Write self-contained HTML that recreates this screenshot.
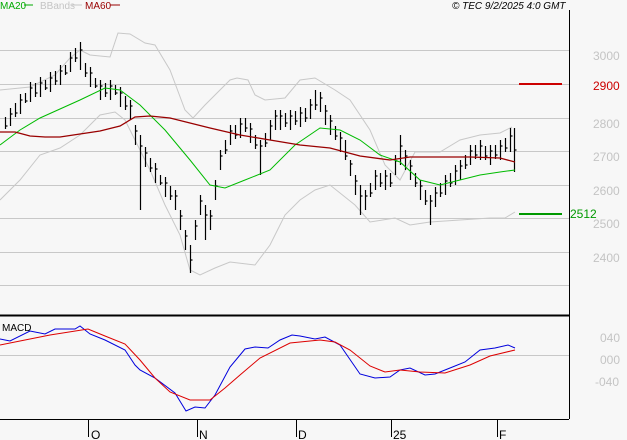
<!DOCTYPE html>
<html><head><meta charset="utf-8"><style>
html,body{margin:0;padding:0;background:#f7f7f7;}
body{width:627px;height:440px;overflow:hidden;font-family:"Liberation Sans",sans-serif;}
svg{display:block}
text{font-family:"Liberation Sans",sans-serif}
</style></head><body>
<svg width="627" height="440" viewBox="0 0 627 440" xmlns="http://www.w3.org/2000/svg">
<rect width="627" height="440" fill="#f7f7f7"/>
<g stroke="#c8c8c8" stroke-width="1">
<line x1="0" y1="50.5" x2="569" y2="50.5"/>
<line x1="0" y1="84.5" x2="569" y2="84.5"/>
<line x1="0" y1="118.5" x2="569" y2="118.5"/>
<line x1="0" y1="151.5" x2="569" y2="151.5"/>
<line x1="0" y1="185.5" x2="569" y2="185.5"/>
<line x1="0" y1="218.5" x2="569" y2="218.5"/>
<line x1="0" y1="252.5" x2="569" y2="252.5"/>
<line x1="0" y1="285.5" x2="569" y2="285.5"/>
<line x1="0" y1="355.5" x2="569" y2="355.5"/>
</g>
<line x1="569.5" y1="10" x2="569.5" y2="419" stroke="#000"/>
<line x1="0" y1="315.5" x2="569" y2="315.5" stroke="#000" stroke-width="2"/>
<line x1="0" y1="419.5" x2="569" y2="419.5" stroke="#000"/>
<g stroke="#000"><line x1="88.5" y1="419" x2="88.5" y2="437"/><line x1="197.5" y1="419" x2="197.5" y2="437"/><line x1="296.5" y1="419" x2="296.5" y2="437"/><line x1="391.5" y1="419" x2="391.5" y2="437"/><line x1="497.5" y1="419" x2="497.5" y2="437"/></g>
<g font-size="12" fill="#000"><text x="91" y="439">O</text><text x="199" y="439">N</text><text x="298" y="439">D</text><text x="393" y="439">25</text><text x="499" y="439">F</text></g>
<g font-size="12" fill="#c4c4c4"><text x="593" y="60">3000</text><text x="593" y="128">2800</text><text x="593" y="161">2700</text><text x="593" y="195">2600</text><text x="593" y="228">2500</text><text x="593" y="262">2400</text>
<text x="600" y="342">040</text><text x="600" y="364">000</text><text x="595" y="386">-040</text></g>
<text x="593" y="90" font-size="12" fill="#cc0000">2900</text>
<line x1="519" y1="84" x2="562" y2="84" stroke="#cc0000" stroke-width="2"/>
<line x1="519" y1="214" x2="562" y2="214" stroke="#009900" stroke-width="2"/>
<text x="570" y="218" font-size="12" fill="#009900">2512</text>
<g font-size="10"><text x="0" y="9" fill="#00aa00">MA20</text><line x1="24" y1="5" x2="33" y2="5" stroke="#00aa00"/>
<text x="40" y="9" fill="#c4c4c4">BBands</text><line x1="72" y1="5" x2="82" y2="5" stroke="#c4c4c4"/>
<text x="85" y="9" fill="#990000">MA60</text><line x1="110" y1="5" x2="120" y2="5" stroke="#990000"/>
<text x="452" y="9" fill="#000" font-style="italic">© TEC 9/2/2025 4:0 GMT</text>
<text x="2" y="331" fill="#000">MACD</text></g>
<polyline fill="none" stroke="#c8c8c8" points="0,90 30,87 55,75 70,58 80,50 90,55 110,57 118,33 130,34 145,43 155,45 170,70 185,110 193,118 205,105 230,80 237,78 248,80 255,95 265,100 285,98 300,80 315,78 335,90 350,100 370,130 385,165 400,180 415,152 440,152 460,140 480,135 500,133 512,127"/>
<polyline fill="none" stroke="#c8c8c8" points="0,200 20,180 40,155 60,148 80,135 100,115 115,112 125,120 140,150 150,170 165,205 180,235 190,270 200,275 215,268 230,262 255,265 270,245 285,215 300,200 315,190 330,185 355,205 370,222 395,218 410,225 430,222 460,220 490,218 505,218 515,212"/>
<path fill="none" stroke="#000" stroke-width="1.2" d="
M5.5,117V129M5.5,126h2 M10.5,108V126M10.5,114h2 M15.5,103V117M15.5,113h2 M20.5,94V114M20.5,100h2 M25.5,93V103M25.5,101h2 M30.5,82V102M30.5,88h2 M35.5,83V97M35.5,93h2 M40.5,77V97M40.5,83h2 M45.5,80V90M45.5,88h2 M50.5,72V92M50.5,78h2 M55.5,71V85M55.5,81h2 M60.5,65V85M60.5,71h2 M65.5,65V75M65.5,73h2 M70.5,52V72M70.5,58h2 M75.5,48V62M75.5,58h2 M80.5,42V70M80.5,50h2 M85.5,63V77M85.5,73h2 M90.5,67V87M90.5,73h2 M95.5,78V88M95.5,86h2 M100.5,80V100M100.5,86h2 M105.5,83V97M105.5,93h2 M110.5,80V100M110.5,86h2 M115.5,85V95M115.5,93h2 M120.5,87V107M120.5,93h2 M125.5,96V110M125.5,106h2 M130.5,100V120M130.5,106h2 M135.5,125V145M135.5,131h2 M140.5,135V210M140.5,146h2 M145.5,147V167M145.5,153h2 M150.5,158V172M150.5,168h2 M155.5,163V183M155.5,169h2 M160.5,175V185M160.5,183h2 M165.5,177V197M165.5,183h2 M170.5,186V200M170.5,196h2 M175.5,190V210M175.5,196h2 M180.5,210V230M180.5,216h2 M185.5,230V250M185.5,236h2 M190.5,245V273M190.5,260h2 M195.5,220V240M195.5,226h2 M200.5,195V215M200.5,201h2 M205.5,205V240M205.5,215h2 M210.5,210V230M210.5,216h2 M215.5,180V200M215.5,186h2 M220.5,150V170M220.5,156h2 M225.5,140V154M225.5,150h2 M230.5,125V145M230.5,131h2 M235.5,125V139M235.5,135h2 M240.5,118V138M240.5,124h2 M245.5,118V132M245.5,128h2 M250.5,123V143M250.5,129h2 M255.5,135V149M255.5,145h2 M260.5,140V175M260.5,146h2 M265.5,133V147M265.5,143h2 M270.5,120V140M270.5,126h2 M275.5,110V130M275.5,116h2 M280.5,110V130M280.5,116h2 M285.5,113V127M285.5,123h2 M290.5,110V130M290.5,116h2 M295.5,111V125M295.5,121h2 M300.5,107V127M300.5,113h2 M305.5,108V122M305.5,118h2 M310.5,99V119M310.5,105h2 M315.5,90V110M315.5,105h2 M320.5,92V112M320.5,98h2 M325.5,105V125M325.5,111h2 M330.5,115V135M330.5,121h2 M335.5,126V140M335.5,136h2 M340.5,132V152M340.5,138h2 M345.5,140V160M345.5,156h2 M350.5,160V176M350.5,164h2 M355.5,175V195M355.5,181h2 M360.5,185V215M360.5,196h2 M365.5,190V210M365.5,196h2 M370.5,183V197M370.5,193h2 M375.5,170V190M375.5,176h2 M380.5,173V187M380.5,183h2 M385.5,170V190M385.5,176h2 M390.5,173V187M390.5,183h2 M395.5,155V175M395.5,161h2 M400.5,135V165M400.5,146h2 M405.5,150V170M405.5,156h2 M410.5,160V180M410.5,166h2 M415.5,173V187M415.5,183h2 M420.5,180V200M420.5,186h2 M425.5,190V205M425.5,201h2 M430.5,195V225M430.5,201h2 M435.5,187V207M435.5,193h2 M440.5,183V197M440.5,193h2 M445.5,175V195M445.5,181h2 M450.5,173V187M450.5,183h2 M455.5,165V185M455.5,171h2 M460.5,160V180M460.5,166h2 M465.5,155V169M465.5,165h2 M470.5,145V165M470.5,151h2 M475.5,145V159M475.5,155h2 M480.5,140V160M480.5,146h2 M485.5,146V160M485.5,156h2 M490.5,145V165M490.5,151h2 M495.5,145V159M495.5,155h2 M500.5,140V160M500.5,146h2 M505.5,138V152M505.5,148h2 M510.5,128V152M510.5,136h2 M514.5,128V172M514.5,150h2"/>
<polyline fill="none" stroke="#00bb00" points="0,145 20,130 40,118 80,100 105,88 120,90 140,105 165,130 190,160 210,185 225,188 245,180 270,170 295,145 320,128 340,130 360,140 380,155 400,162 420,180 440,185 460,180 480,175 500,172 515,170"/>
<polyline fill="none" stroke="#990000" stroke-width="1.3" points="0,132 15,132 30,136 45,137 60,137 80,134 100,131 120,126 135,117 150,116 170,118 190,123 210,128 240,135 270,140 300,145 330,148 360,156 390,160 410,157 440,157 470,157 500,158 515,162"/>
<polyline fill="none" stroke="#0000dd" points="0,339 10,341 30,331 45,334 55,329 75,329 80,326 90,334 105,340 125,350 135,365 140,370 155,378 175,393 186,411 195,407 205,408 215,395 230,367 245,349 255,347 268,348 280,340 292,335 300,336 315,339 325,337 340,345 360,374 375,378 390,377 400,370 410,368 425,375 435,374 450,368 465,362 480,350 495,348 508,345 515,348"/>
<polyline fill="none" stroke="#dd0000" points="0,345 20,341 50,335 88,329 105,336 125,344 140,360 155,378 170,392 190,400 210,400 225,388 240,375 260,358 290,343 320,340 335,342 350,350 370,366 385,372 400,370 420,372 445,373 470,365 490,356 515,350"/>
</svg>
</body></html>
